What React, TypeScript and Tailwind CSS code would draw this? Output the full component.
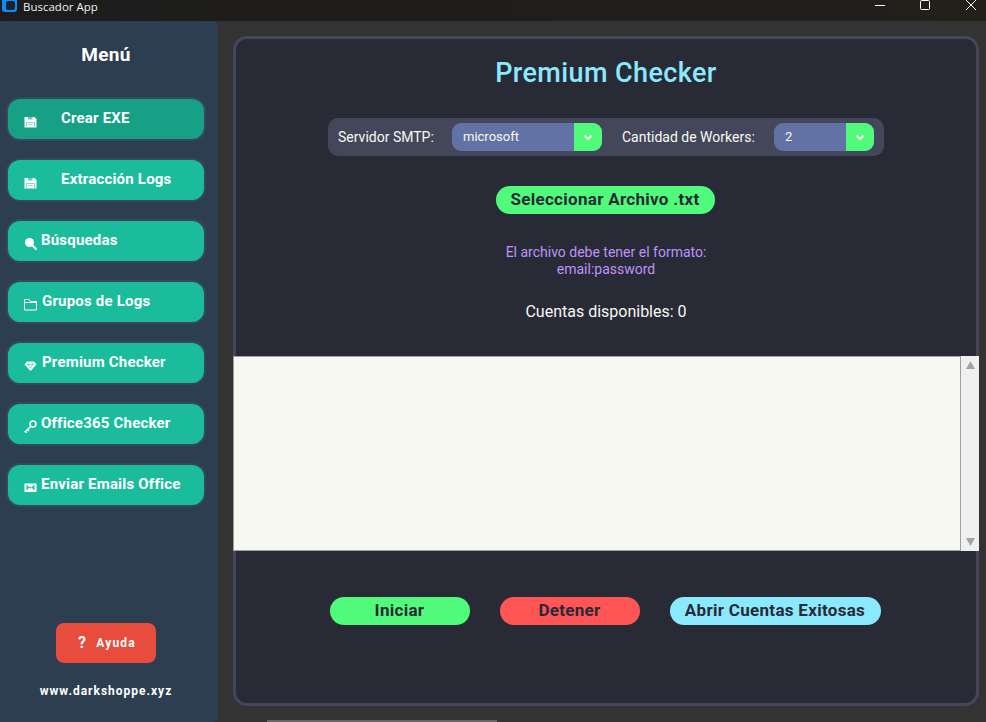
import { ReactNode } from 'react';

const Floppy = () => (
  <svg width="13" height="13" viewBox="0 0 13 13" className="shrink-0">
    <path d="M0.5 2 H10.5 L12.5 4 V12.5 H0.5 Z" fill="#fff" />
    <rect x="4" y="2" width="4.5" height="2.5" fill="#1abc9c" opacity="0.7" />
    <path d="M2.5 7.5 H10.5 V12 M2.5 7.5 V12" fill="none" stroke="#1abc9c" strokeWidth="0.7" opacity="0.8" />
    <path d="M4 9.5 H9" stroke="#1abc9c" strokeWidth="0.7" opacity="0.7" />
  </svg>
);

const Search = () => (
  <svg width="13" height="13" viewBox="0 0 13 13" className="shrink-0">
    <circle cx="5.5" cy="5.5" r="4.5" fill="#fff" />
    <path d="M8.5 8.5 L12 12" stroke="#fff" strokeWidth="2" strokeLinecap="round" />
  </svg>
);

const Folder = () => (
  <svg width="13" height="13" viewBox="0 0 13 13" fill="none" stroke="#fff" strokeWidth="1" className="shrink-0">
    <path d="M0.5 12 V1.5 H5 L6.5 3.5 H12.5 V12 Z M0.5 4.5 H12.5" />
  </svg>
);

const Gem = () => (
  <svg width="13" height="13" viewBox="0 0 13 13" className="shrink-0">
    <path d="M3 2.5 H10 L12.5 5.5 L6.5 12 L0.5 5.5 Z" fill="#fff" />
    <path d="M3 5.5 H10 M5 3 L4.5 5.5 L6.5 9 L8.5 5.5 L8 3" fill="none" stroke="#1abc9c" strokeWidth="0.5" />
  </svg>
);

const KeyIcon = () => (
  <svg width="13" height="13" viewBox="0 0 13 13" fill="none" stroke="#fff" strokeWidth="1.4" className="shrink-0">
    <circle cx="9" cy="4" r="3" />
    <path d="M6.8 6.2 L1.2 11.8 L2.8 12.4 M3.5 9.5 L5 11" />
  </svg>
);

const Mail = () => (
  <svg width="13" height="13" viewBox="0 0 13 13" className="shrink-0">
    <rect x="0.5" y="2.5" width="12" height="8.5" fill="#fff" />
    <path d="M2.5 3.5 L5.5 6.5 L2.5 9.5 Z M10.5 3.5 L7.5 6.5 L10.5 9.5 Z" fill="#1abc9c" />
    <circle cx="6.5" cy="6.5" r="1" fill="#1abc9c" />
  </svg>
);

function MenuButton({ icon, label, active, textGap }: { icon: ReactNode; label: string; active?: boolean; textGap: string }) {
  return (
    <div className={`h-[44px] w-[200px] rounded-[14px] border-2 border-[#34495e] flex items-center pl-[16px] text-white text-[15px] font-bold tracking-[0.2px] ${active ? 'bg-[#16a085]' : 'bg-[#1abc9c]'}`}>
      <span className="mt-[5px]">{icon}</span>
      <span className={`${textGap} -mt-[1px] whitespace-nowrap`}>{label}</span>
    </div>
  );
}

function Select({ value, width }: { value: string; width: string }) {
  return (
    <div className={`${width} h-[28px] rounded-[9px] bg-[#6272a4] flex overflow-hidden`}>
      <span className="flex-1 pl-[11px] text-[13px] leading-[28px] text-[#f8f8f2]">{value}</span>
      <span className="w-[28px] bg-[#50fa7b] flex items-center justify-center">
        <svg width="10" height="7" viewBox="0 0 10 7" fill="none" stroke="#f8f8f2" strokeWidth="2">
          <path d="M1.5 1.5 L5 5 L8.5 1.5" />
        </svg>
      </span>
    </div>
  );
}

function ActionButton({ label, bg, width }: { label: string; bg: string; width: string }) {
  return (
    <div className={`${bg} ${width} h-[28px] rounded-[14px] flex items-center justify-center text-[#282a36] text-[17px] font-bold tracking-[0.3px] whitespace-nowrap`}>
      {label}
    </div>
  );
}

export default function App() {
  return (
    <div className="relative w-[986px] h-[722px] overflow-hidden flex flex-col bg-[#333333] font-['Roboto',sans-serif]">
      {/* Title bar */}
      <div className="h-[21px] shrink-0 bg-gradient-to-r from-[#1c1c1c] to-[#231f1b] flex items-start text-white">
        <div className="ml-[2px] w-[15px] h-[14px] -mt-[2px] rounded-[3px] bg-[#0a8cff] flex items-center justify-center">
          <div className="ml-[1px] w-[9px] h-[9px] rounded-[2px] bg-[#1c2230]" />
        </div>
        <span className="ml-[6px] text-[11.5px] leading-[14px] text-[#f0f0f0] font-['Open_Sans',sans-serif]">Buscador App</span>
        <div className="ml-auto flex items-start text-white">
          <svg width="10" height="10" viewBox="0 0 10 10" stroke="#fff" fill="none"><path d="M0 5.5 H10" /></svg>
          <svg width="10" height="10" viewBox="0 0 10 10" stroke="#fff" fill="none" className="ml-[35px]"><rect x="0.5" y="0.5" width="9" height="9" rx="1" /></svg>
          <svg width="10" height="10" viewBox="0 0 10 10" stroke="#fff" fill="none" className="ml-[36px] mr-[10px]"><path d="M0 0 L10 10 M10 0 L0 10" /></svg>
        </div>
      </div>

      <div className="flex-1 flex min-h-0">
        {/* Sidebar */}
        <div className="w-[218px] shrink-0 bg-[#2c3e50] rounded-r-[5px] flex flex-col items-center pl-[6px] pr-[12px]">
          <div className="mt-[20px] text-white text-[19px] leading-[27px] font-bold tracking-[0.3px]">Menú</div>
          <div className="mt-[29px] flex flex-col gap-[17px]">
            <MenuButton icon={<Floppy />} label="Crear EXE" active textGap="ml-[24px]" />
            <MenuButton icon={<Floppy />} label="Extracción Logs" textGap="ml-[24px]" />
            <MenuButton icon={<Search />} label="Búsquedas" textGap="ml-[4px]" />
            <MenuButton icon={<Folder />} label="Grupos de Logs" textGap="ml-[5px]" />
            <MenuButton icon={<Gem />} label="Premium Checker" textGap="ml-[5px]" />
            <MenuButton icon={<KeyIcon />} label="Office365 Checker" textGap="ml-[4px]" />
            <MenuButton icon={<Mail />} label="Enviar Emails Office" textGap="ml-[4px]" />
          </div>
          <div className="mt-auto w-[100px] h-[40px] rounded-[8px] bg-[#e74c3c] flex items-center justify-center text-white text-[12px] font-bold tracking-[1.2px] pl-[2px]">
            <span className="text-[16px] mr-[9px]">?</span><span className="-mt-[1px]">Ayuda</span>
          </div>
          <div className="mt-[19px] mb-[22px] text-white text-[12px] leading-[18px] font-bold tracking-[1px]">www.darkshoppe.xyz</div>
        </div>

        {/* Main panel */}
        <div className="flex-1 min-w-0 pt-[15px] pl-[15px] pr-[7px] pb-[16px]">
          <div className="h-full rounded-[14px] border-[3px] border-[#44475a] bg-[#282a36] flex flex-col items-center">
            <div className="mt-[16px] text-[#8be9fd] text-[27px] font-medium tracking-[0.4px] leading-[36px]">Premium Checker</div>

            <div className="mt-[27px] w-[556px] h-[38px] rounded-[10px] bg-[#44475a] flex items-center pl-[10px] text-[14px] text-[#f8f8f2]">
              <span className="w-[114px]">Servidor SMTP:</span>
              <Select value="microsoft" width="w-[150px]" />
              <span className="ml-[20px] w-[152px]">Cantidad de Workers:</span>
              <Select value="2" width="w-[100px]" />
            </div>

            <div className="mt-[30px] mr-[2px]">
              <ActionButton label="Seleccionar Archivo .txt" bg="bg-[#50fa7b]" width="w-[219px]" />
            </div>

            <div className="mt-[30px] text-center text-[14px] leading-[17px] text-[#bd93f9]">
              El archivo debe tener el formato:<br />email:password
            </div>

            <div className="mt-[24px] text-[16px] leading-[20px] text-[#f8f8f2]">Cuentas disponibles: 0</div>

            {/* Log area */}
            <div className="mt-[34px] self-stretch -ml-[3px] -mr-[3px] h-[195px] flex bg-[#f0f0f0]">
              <div className="flex-1 bg-[#f8f8f2] border border-[#a0a0a0]" />
              <div className="w-[17px] ml-[1px] flex flex-col items-center justify-between py-[5px]">
                <svg width="9" height="8" viewBox="0 0 9 8" fill="#a3a3a3"><path d="M4.5 0 L9 8 H0 Z" /></svg>
                <svg width="9" height="8" viewBox="0 0 9 8" fill="#a3a3a3"><path d="M0 0 H9 L4.5 8 Z" /></svg>
              </div>
            </div>

            <div className="mt-[46px] mr-[2px] flex gap-[30px]">
              <ActionButton label="Iniciar" bg="bg-[#50fa7b]" width="w-[140px]" />
              <ActionButton label="Detener" bg="bg-[#ff5555]" width="w-[140px]" />
              <ActionButton label="Abrir Cuentas Exitosas" bg="bg-[#8be9fd]" width="w-[211px]" />
            </div>
          </div>
        </div>
      </div>

      {/* stray window edge at the bottom of the capture */}
      <div className="absolute bottom-0 left-[267px] w-[230px] h-[2px] bg-[#666666]" />
    </div>
  );
}
